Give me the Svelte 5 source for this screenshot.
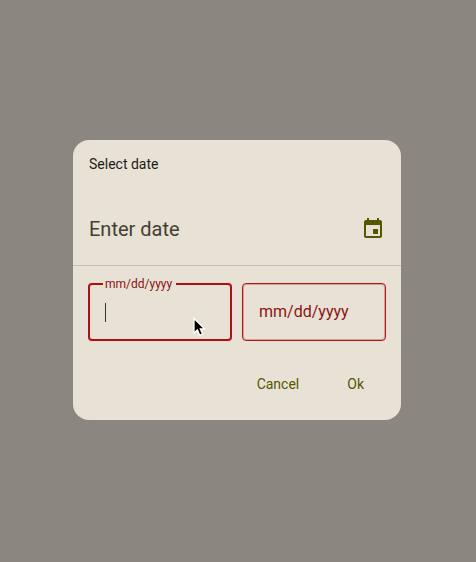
<script>
  let start = $state('');
  let end = $state('');
</script>

<main class="scrim">
  <form class="dialog" onsubmit={(e) => e.preventDefault()}>
    <header>
      <p class="overline">Select date</p>
      <div class="headline">
        <h1>Enter date</h1>
        <button type="button" class="icon-button" aria-label="Switch to calendar">
          <svg viewBox="0 0 24 24" width="24" height="24" fill="currentColor" aria-hidden="true">
            <path d="M17 12h-5v5h5v-5zM16 1v2H8V1H6v2H5c-1.11 0-1.99.9-1.99 2L3 19c0 1.1.89 2 2 2h14c1.1 0 2-.9 2-2V5c0-1.1-.9-2-2-2h-1V1h-2zm3 18H5V8h14v11z" />
          </svg>
        </button>
      </div>
    </header>

    <div class="fields">
      <div class="field active">
        <label for="start">mm/dd/yyyy</label>
        <input id="start" type="text" inputmode="numeric" bind:value={start} />
        <span class="caret"></span>
        <svg class="pointer" viewBox="0 0 14 20" width="14" height="20" aria-hidden="true">
          <path d="M2 1.500v14.500l3.400-3.100 2.300 5.300 2.900-1.200-2.300-5.100H12.600z" fill="#000" stroke="#fff" stroke-width="1.300" />
        </svg>
      </div>
      <div class="field">
        <input id="end" type="text" inputmode="numeric" aria-label="mm/dd/yyyy" placeholder="mm/dd/yyyy" bind:value={end} />
      </div>
    </div>

    <footer>
      <button type="button" class="action">Cancel</button>
      <button type="submit" class="action">Ok</button>
    </footer>
  </form>
</main>

<style>
  .scrim {
    box-sizing: border-box;
    min-height: 100vh;
    padding: 0 2px 2px 0;
    display: flex;
    align-items: center;
    justify-content: center;
    background: #8b8680;
    font-family: Roboto, "Liberation Sans", sans-serif;
  }

  .dialog {
    width: 100%;
    max-width: 328px;
    overflow: hidden;
    border-radius: 16px;
    background: #e7e2d5;
  }

  header {
    padding: 14px 16px 16px;
    border-bottom: 1px solid #c3beb1;
  }

  .overline {
    margin: 0 0 35px;
    font-size: 14px;
    line-height: 20px;
    color: #1d1c16;
  }

  .headline {
    display: flex;
    align-items: center;
    justify-content: space-between;
  }

  h1 {
    margin: 0;
    font-size: 20px;
    font-weight: 400;
    line-height: 40px;
    color: #454032;
  }

  button {
    border: 0;
    background: none;
    font: inherit;
    color: #565600;
    cursor: pointer;
  }

  .icon-button {
    display: flex;
    padding: 0;
  }

  .fields {
    display: flex;
    gap: 10px;
    padding: 17px 15px 0;
  }

  .field {
    position: relative;
    flex: 1;
    min-width: 0;
  }

  input {
    box-sizing: border-box;
    display: block;
    width: 100%;
    height: 58px;
    padding: 0 16px 2px;
    border: 1px solid #b5181b;
    border-radius: 4px;
    outline: none;
    box-shadow: inset 0 0 0 1px rgb(190 30 32 / 35%);
    background: transparent;
    font: 16px Roboto, "Liberation Sans", sans-serif;
    color: #1d1c16;
  }

  input::placeholder {
    color: #8c1212;
    opacity: 1;
  }

  .active input {
    border: 2px solid #ae1012;
    box-shadow: none;
  }

  label {
    position: absolute;
    top: -7px;
    left: 15px;
    padding: 0 4px 0 2px;
    background: #e7e2d5;
    font-size: 12px;
    line-height: 16px;
    color: #8c1212;
  }

  .caret {
    position: absolute;
    top: 20px;
    left: 17px;
    width: 1px;
    height: 19px;
    background: #3a352c;
  }

  .pointer {
    position: absolute;
    top: 34px;
    right: 26px;
  }

  footer {
    display: flex;
    justify-content: flex-end;
    gap: 24px;
    padding: 23px 25px 16px;
  }

  .action {
    padding: 0 12px;
    font-size: 14px;
    line-height: 40px;
  }
</style>
